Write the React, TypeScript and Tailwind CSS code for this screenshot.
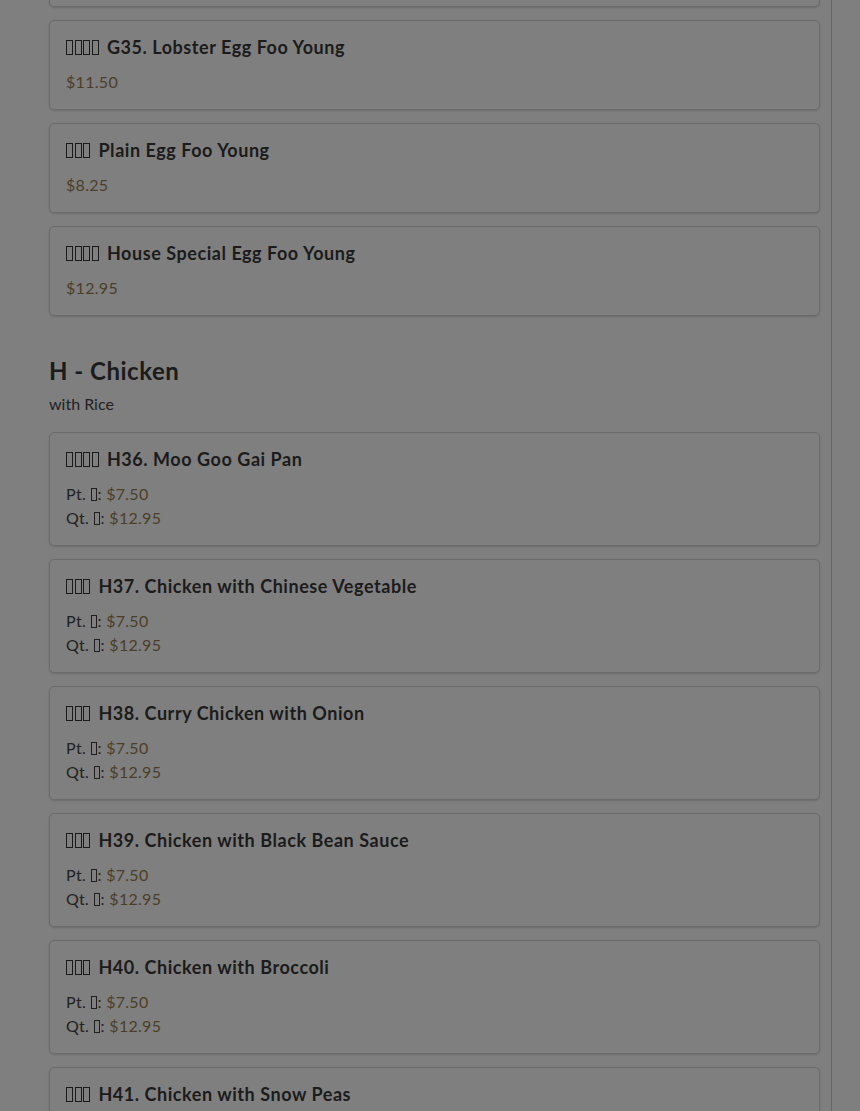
const tofu = (n: number, small?: boolean) =>
  Array.from({ length: n }).map((_, i) => (
    <span
      key={i}
      className={
        small
          ? "inline-block w-[6px] h-[13px] border border-[#1f1f1f] mx-[0.5px] align-[-1px]"
          : "inline-block w-[7px] h-[15px] border border-[#1a1a1a] mr-[1.5px] align-[-1px]"
      }
    />
  ));

type Item = { zh: number; name: string; price?: string; pt?: string; qt?: string };

const eggFooYoung: Item[] = [
  { zh: 4, name: "G34. Shrimp Egg Foo Young", price: "$10.25" },
  { zh: 4, name: "G35. Lobster Egg Foo Young", price: "$11.50" },
  { zh: 3, name: "Plain Egg Foo Young", price: "$8.25" },
  { zh: 4, name: "House Special Egg Foo Young", price: "$12.95" }
];

const chicken: Item[] = [
  { zh: 4, name: "H36. Moo Goo Gai Pan", pt: "$7.50", qt: "$12.95" },
  { zh: 3, name: "H37. Chicken with Chinese Vegetable", pt: "$7.50", qt: "$12.95" },
  { zh: 3, name: "H38. Curry Chicken with Onion", pt: "$7.50", qt: "$12.95" },
  { zh: 3, name: "H39. Chicken with Black Bean Sauce", pt: "$7.50", qt: "$12.95" },
  { zh: 3, name: "H40. Chicken with Broccoli", pt: "$7.50", qt: "$12.95" },
  { zh: 3, name: "H41. Chicken with Snow Peas", pt: "$7.50", qt: "$12.95" }
];

function MenuCard({ item, className = "" }: { item: Item; className?: string }) {
  return (
    <div
      className={`border border-[#6b6b6b] rounded-[5px] px-4 pt-4 pb-[15px] shadow-[0_1px_2px_rgba(0,0,0,0.15)] ${className}`}
    >
      <h3 className="text-[18px] leading-[20px] font-bold tracking-[0.55px] text-[#1b1b1b]">
        {tofu(item.zh)} <span className="ml-[2px]">{item.name}</span>
      </h3>
      <div className="mt-[13px] text-[16px] leading-[24px] tracking-[0.3px]">
        {item.price ? (
          <div className="text-[#4b3e28]">{item.price}</div>
        ) : (
          <>
            <div className="text-[#222]">
              Pt. {tofu(1, true)}: <span className="text-[#4b3e28]">{item.pt}</span>
            </div>
            <div className="text-[#222]">
              Qt. {tofu(1, true)}: <span className="text-[#4b3e28]">{item.qt}</span>
            </div>
          </>
        )}
      </div>
    </div>
  );
}

export default function App() {
  return (
    <div
      className="min-h-screen bg-[#7f7f7f] overflow-hidden"
      style={{ fontFamily: "Lato, 'Noto Sans', sans-serif" }}
    >
      <div className="w-[832px] border-r border-[#666] pl-[49px] pr-[11px] min-h-screen">
        <div className="flex flex-col gap-[13px]">
          {eggFooYoung.map((item, i) => (
            <MenuCard key={item.name} item={item} className={i === 0 ? "mt-[-83px]" : ""} />
          ))}
        </div>

        {/* Chicken section */}
        <section className="mt-[40px]">
          <h2 className="text-[24px] leading-[29px] font-bold tracking-[0.5px] text-[#1b1b1b]">
            H - Chicken
          </h2>
          <p className="mt-[8px] text-[16px] leading-[22px] text-[#222]">with Rice</p>
          <div className="mt-[17px] flex flex-col gap-[13px]">
            {chicken.map((item) => (
              <MenuCard key={item.name} item={item} />
            ))}
          </div>
        </section>
      </div>
    </div>
  );
}
